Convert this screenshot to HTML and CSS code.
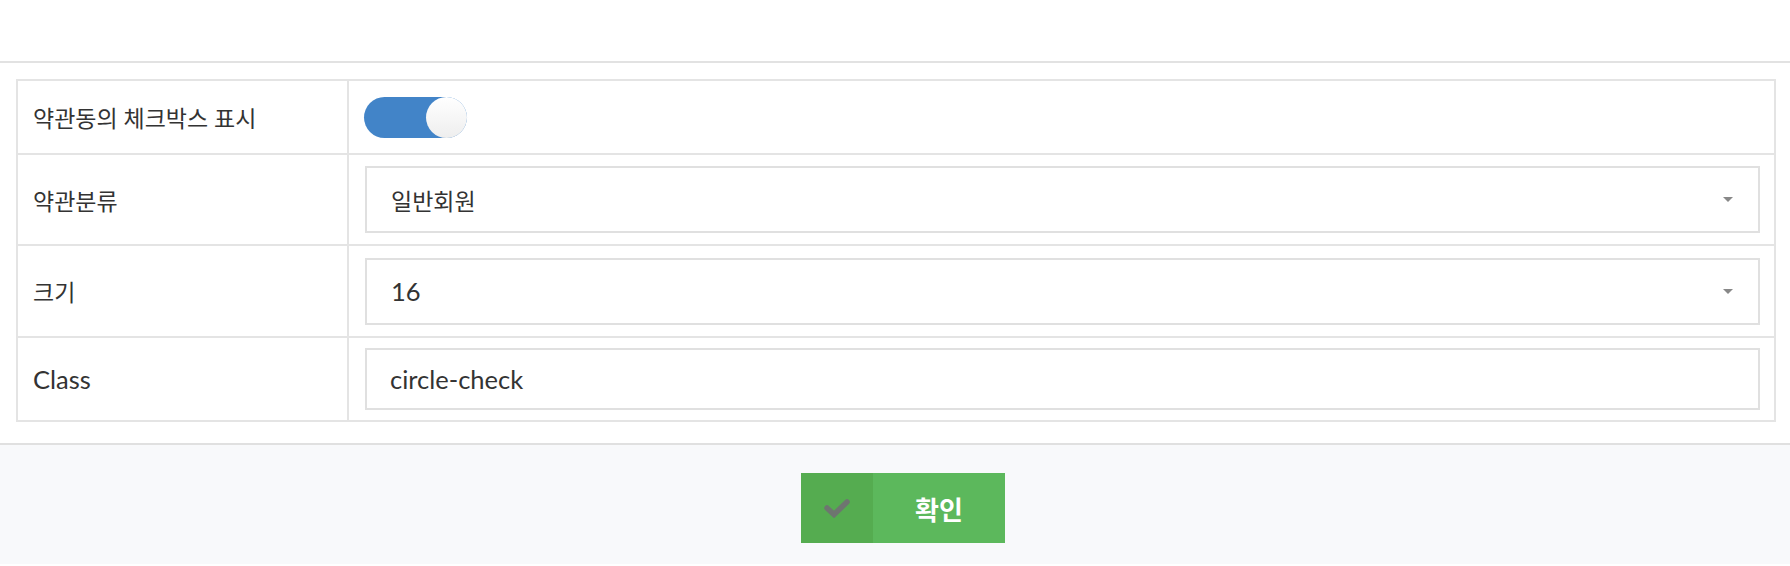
FILE: index.html
```html
<!DOCTYPE html>
<html lang="ko">
<head>
<meta charset="utf-8">
<link rel="stylesheet" href="styles.css">
</head>
<body>
<div class="topbar"></div>
<div class="content">
  <div class="form-table">
    <div class="row row-toggle">
      <div class="label">약관동의 체크박스 표시</div>
      <div class="value"><span class="toggle"><span class="knob"></span></span></div>
    </div>
    <div class="row row-cat">
      <div class="label">약관분류</div>
      <div class="value"><div class="select"><span>일반회원</span><span class="caret"></span></div></div>
    </div>
    <div class="row row-size">
      <div class="label">크기</div>
      <div class="value"><div class="select"><span class="latin">16</span><span class="caret"></span></div></div>
    </div>
    <div class="row row-class">
      <div class="label"><span class="latin">Class</span></div>
      <div class="value"><div class="input"><span class="latin">circle-check</span></div></div>
    </div>
  </div>
</div>
<div class="footer">
  <button class="btn-ok">
    <span class="btn-icon">
      <svg width="28" height="20" viewBox="0 0 28 20"><polyline points="4,10 11,16.5 24,4" fill="none" stroke="#6e7570" stroke-width="5.5" stroke-linecap="round" stroke-linejoin="miter"/></svg>
    </span>
    <span class="btn-text">확인</span>
  </button>
</div>
</body>
</html>
```

FILE: styles.css
```css
html, body {
  margin: 0;
  padding: 0;
  background: #ffffff;
  font-family: "Lato", "Noto Sans CJK KR", sans-serif;
  color: #333333;
}

.topbar {
  height: 61px;
  border-bottom: 2px solid #e2e2e2;
}

.content {
  padding: 16px 14px 21px 16px;
}

.form-table {
  border: 2px solid #e4e4e4;
}

.row {
  display: grid;
  grid-template-columns: 331px 1fr;
  font-size: 23px;
}

.row + .row {
  border-top: 2px solid #e4e4e4;
}

.label {
  border-right: 2px solid #e4e4e4;
  display: flex;
  align-items: center;
  padding-left: 15px;
}

.value {
  display: flex;
  align-items: center;
  padding: 0 14px 0 16px;
}

.latin {
  font-size: 25.5px;
}

.row-toggle { height: 72px; }
.row-cat { height: 89px; }
.row-size { height: 90px; }
.row-class { height: 82px; }

.toggle {
  display: block;
  width: 103px;
  height: 41px;
  border-radius: 21px;
  background: #4284c8;
  position: relative;
  margin-top: 1px;
  margin-left: -1px;
}

.knob {
  position: absolute;
  right: 0;
  top: 0;
  width: 41px;
  height: 41px;
  border-radius: 50%;
  background: linear-gradient(#ffffff, #eeeeee);
}

.select {
  flex: 1;
  height: 63px;
  border: 2px solid #e0e0e0;
  display: flex;
  align-items: center;
  justify-content: space-between;
  padding: 0 25px 0 24px;
}

.caret {
  width: 0;
  height: 0;
  border-left: 5px solid transparent;
  border-right: 5px solid transparent;
  border-top: 5px solid #888888;
}

.input {
  flex: 1;
  height: 58px;
  border: 2px solid #e0e0e0;
  display: flex;
  align-items: center;
  padding: 0 23px;
}

.footer {
  border-top: 2px solid #e0e0e0;
  background: #f8f9fb;
  height: 121px;
  display: flex;
  justify-content: center;
  align-items: flex-start;
  padding: 28px 0 0 16px;
  box-sizing: border-box;
}

.btn-ok {
  display: flex;
  border: 0;
  padding: 0;
  height: 70px;
  width: 204px;
  background: #5cb85c;
  cursor: pointer;
  font-family: "Lato", "Noto Sans CJK KR", sans-serif;
}

.btn-icon {
  width: 72px;
  height: 70px;
  background: #55ac50;
  display: flex;
  align-items: center;
  justify-content: center;
}

.btn-text {
  flex: 1;
  display: flex;
  align-items: center;
  justify-content: center;
  color: #ffffff;
  font-size: 26px;
  font-weight: 700;
}
```
